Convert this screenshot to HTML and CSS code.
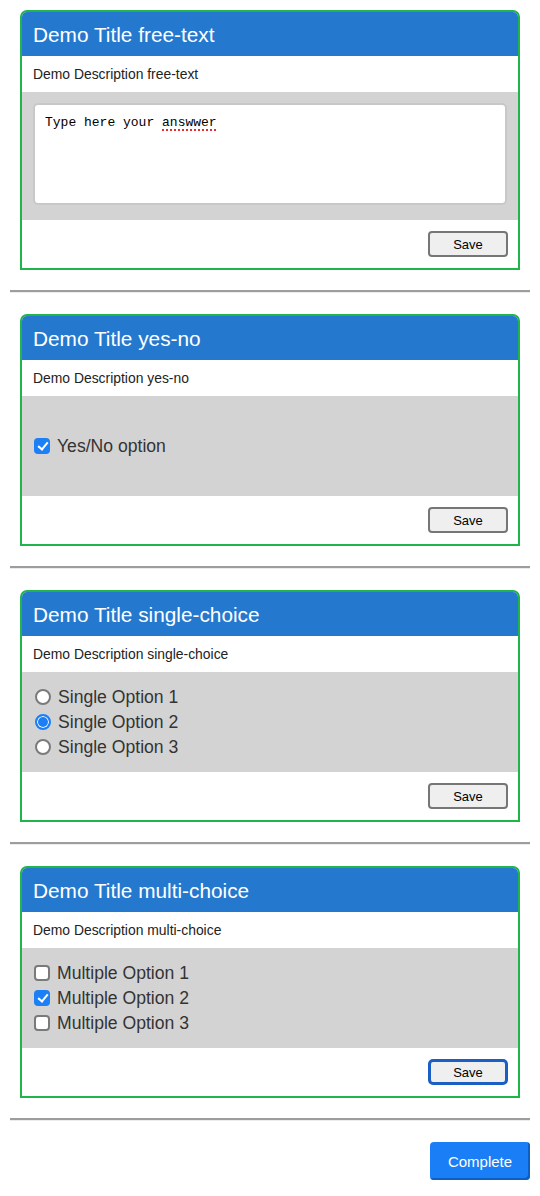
FILE: index.html
```html
<!DOCTYPE html>
<html>
<head>
<meta charset="utf-8">
<link rel="stylesheet" href="styles.css">
</head>
<body>
<div class="page">
  <section class="card">
    <header class="card-title">Demo Title free-text</header>
    <div class="card-desc">Demo Description free-text</div>
    <div class="card-body body-text">
      <div class="answer">Type here your <span class="typo">answwer</span></div>
    </div>
    <div class="card-foot"><button class="save">Save</button></div>
  </section>
  <hr class="sep">
  <section class="card">
    <header class="card-title">Demo Title yes-no</header>
    <div class="card-desc">Demo Description yes-no</div>
    <div class="card-body body-yesno">
      <label class="opt"><input type="checkbox" class="box" checked> Yes/No option</label>
    </div>
    <div class="card-foot"><button class="save">Save</button></div>
  </section>
  <hr class="sep">
  <section class="card">
    <header class="card-title">Demo Title single-choice</header>
    <div class="card-desc">Demo Description single-choice</div>
    <div class="card-body body-list">
      <label class="opt"><input type="radio" name="s" class="radio"> Single Option 1</label>
      <label class="opt"><input type="radio" name="s" class="radio" checked> Single Option 2</label>
      <label class="opt"><input type="radio" name="s" class="radio"> Single Option 3</label>
    </div>
    <div class="card-foot"><button class="save">Save</button></div>
  </section>
  <hr class="sep">
  <section class="card">
    <header class="card-title">Demo Title multi-choice</header>
    <div class="card-desc">Demo Description multi-choice</div>
    <div class="card-body body-list">
      <label class="opt"><input type="checkbox" class="box"> Multiple Option 1</label>
      <label class="opt"><input type="checkbox" class="box" checked> Multiple Option 2</label>
      <label class="opt"><input type="checkbox" class="box"> Multiple Option 3</label>
    </div>
    <div class="card-foot"><button class="save focused">Save</button></div>
  </section>
  <hr class="sep">
  <div class="actions"><button class="complete">Complete</button></div>
</div>
</body>
</html>
```

FILE: styles.css
```css
html, body {
  margin: 0;
  padding: 0;
  background: #fff;
  font-family: "Liberation Sans", Arial, sans-serif;
}

.page {
  padding: 10px 10px 16px;
}

.card {
  margin: 0 10px;
  border: 2px solid #1fb54a;
  border-radius: 7px 7px 0 0;
  overflow: hidden;
}

.card-title {
  background: #2479cf;
  color: #fff;
  font-size: 20.8px;
  height: 44px;
  line-height: 45px;
  padding: 0 11px;
}

.card-desc {
  height: 36px;
  line-height: 36px;
  padding: 0 11px;
  font-size: 13.9px;
  color: #222;
  background: #fff;
}

.card-body {
  background: #d3d3d3;
  box-sizing: border-box;
}

.body-text {
  height: 128px;
  padding: 11px;
}

.answer {
  box-sizing: border-box;
  width: 100%;
  height: 102px;
  border: 2px solid #c8c8c8;
  border-radius: 5px;
  background: #fff;
  padding: 10px 10px;
  font-family: "Liberation Mono", "Courier New", monospace;
  font-size: 13px;
  line-height: 16px;
  color: #000;
}

.typo {
  text-decoration: underline dotted #e03030;
  text-decoration-thickness: 2px;
  text-underline-offset: 3px;
}

.body-yesno {
  height: 100px;
  display: flex;
  align-items: center;
  padding: 0 12px;
}

.body-list {
  height: 100px;
  display: flex;
  flex-direction: column;
  justify-content: center;
  padding: 0 12px;
}

.opt {
  display: flex;
  align-items: center;
  gap: 7px;
  font-size: 17.6px;
  color: #333;
  height: 25px;
}

.box, .radio {
  -webkit-appearance: none;
  appearance: none;
  margin: 0;
  width: 16px;
  height: 16px;
  box-sizing: border-box;
  border: 2px solid #7a7a7a;
  background: #fff;
  position: relative;
  flex: none;
}

.box {
  border-radius: 4px;
}

.box:checked {
  background: #1d7ff5;
  border-color: #1d7ff5;
}

.box:checked::after {
  content: "";
  position: absolute;
  left: 3.5px;
  top: 0px;
  width: 4px;
  height: 8px;
  border: solid #fff;
  border-width: 0 2.5px 2.5px 0;
  transform: rotate(40deg);
}

.radio {
  border-radius: 50%;
  margin-left: 1px;
}

.radio:checked {
  background: #1d7ff5;
  border-color: #1d7ff5;
  box-shadow: inset 0 0 0 1px #fff;
}

.card-foot {
  height: 48px;
  display: flex;
  justify-content: flex-end;
  align-items: center;
  padding: 0 10px;
  background: #fff;
}

.save {
  width: 80px;
  height: 26px;
  box-sizing: border-box;
  border: 2px solid #767676;
  border-radius: 4px;
  background: #efefef;
  font-family: "Liberation Sans", Arial, sans-serif;
  font-size: 13px;
  color: #000;
  padding: 0;
}

.save.focused {
  border: 3px solid #1c5fc4;
  border-radius: 5px;
}

.sep {
  margin: 20px 0 21px;
  height: 0;
  border: 0;
  border-top: 2px solid #9d9d9d;
  border-bottom: 1px solid #ececec;
}

.actions {
  display: flex;
  justify-content: flex-end;
}

.complete {
  width: 100px;
  height: 38px;
  box-sizing: border-box;
  border: 0;
  border-radius: 4px;
  background: #1a7ff6;
  box-shadow: inset -2px -2px 0 #0d5fc2;
  color: #fff;
  font-family: "Liberation Sans", Arial, sans-serif;
  font-size: 15px;
  padding: 0;
}
```
